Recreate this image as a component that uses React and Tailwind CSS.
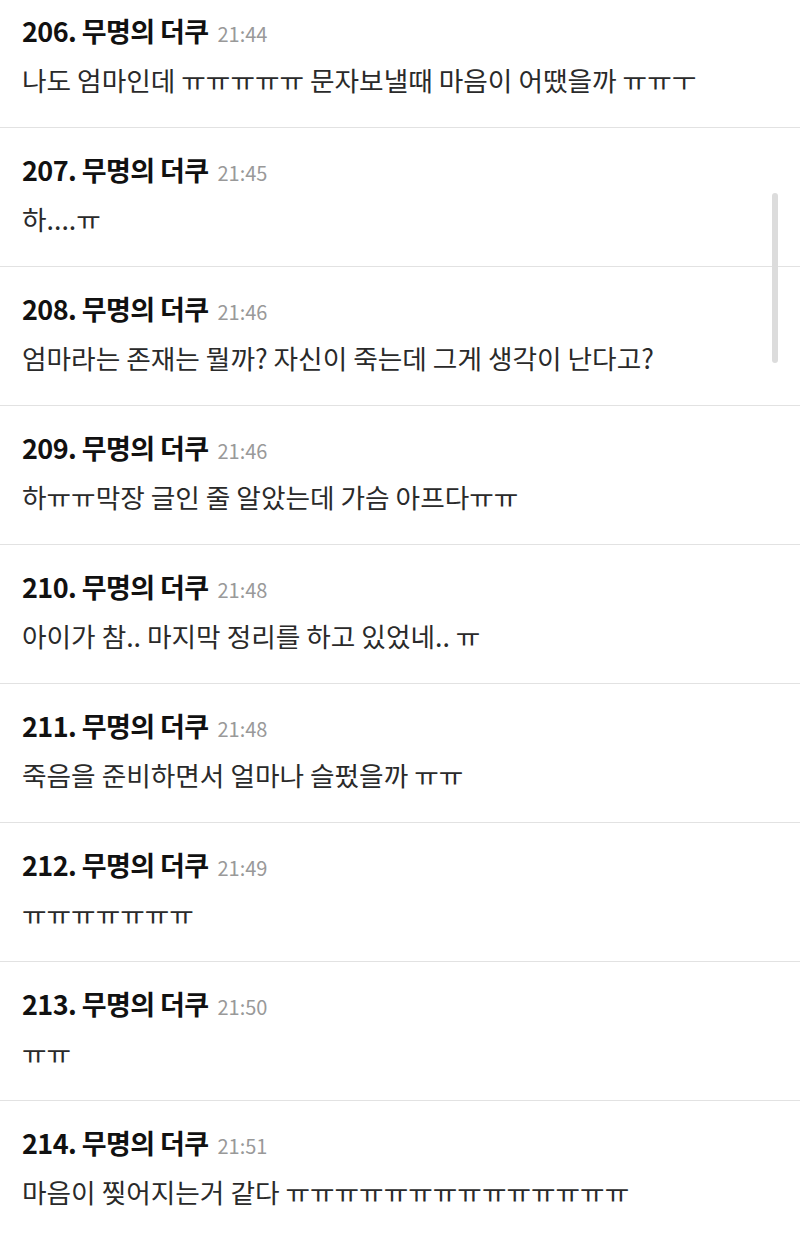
const comments = [
  { no: 206, time: '21:44', text: '나도 엄마인데 ㅠㅠㅠㅠㅠ 문자보낼때 마음이 어땠을까 ㅠㅠㅜ' },
  { no: 207, time: '21:45', text: '하....ㅠ' },
  { no: 208, time: '21:46', text: '엄마라는 존재는 뭘까? 자신이 죽는데 그게 생각이 난다고?' },
  { no: 209, time: '21:46', text: '하ㅠㅠ막장 글인 줄 알았는데 가슴 아프다ㅠㅠ' },
  { no: 210, time: '21:48', text: '아이가 참.. 마지막 정리를 하고 있었네.. ㅠ' },
  { no: 211, time: '21:48', text: '죽음을 준비하면서 얼마나 슬펐을까 ㅠㅠ' },
  { no: 212, time: '21:49', text: 'ㅠㅠㅠㅠㅠㅠㅠ' },
  { no: 213, time: '21:50', text: 'ㅠㅠ' },
  { no: 214, time: '21:51', text: '마음이 찢어지는거 같다 ㅠㅠㅠㅠㅠㅠㅠㅠㅠㅠㅠㅠㅠㅠ' },
];

function Comment({ comment }) {
  return (
    <li className="border-b border-[#e2e2e2] px-[22px] pt-[24px] h-[139px]">
      <div className="flex items-baseline gap-[9px]">
        <span className="text-[27px] font-bold text-[#111] leading-[36px] tracking-[-0.6px]">
          {comment.no}. 무명의 더쿠
        </span>
        <span className="text-[20px] text-[#999]">{comment.time}</span>
      </div>
      <p className="mt-[13px] text-[26.7px] leading-[36px] text-[#2a2a2a]">{comment.text}</p>
    </li>
  );
}

export default function App() {
  return (
    <div
      className="relative w-[800px] h-[1239px] overflow-hidden bg-white"
      style={{ fontFamily: '"Noto Sans CJK KR", "Noto Sans", sans-serif' }}
    >
      <ul className="-mt-[11px]">
        {comments.map((c) => (
          <Comment key={c.no} comment={c} />
        ))}
      </ul>
      {/* scrollbar */}
      <div className="absolute left-[772px] top-[193px] w-[6px] h-[170px] rounded-full bg-[#dcdcdc]" />
    </div>
  );
}
